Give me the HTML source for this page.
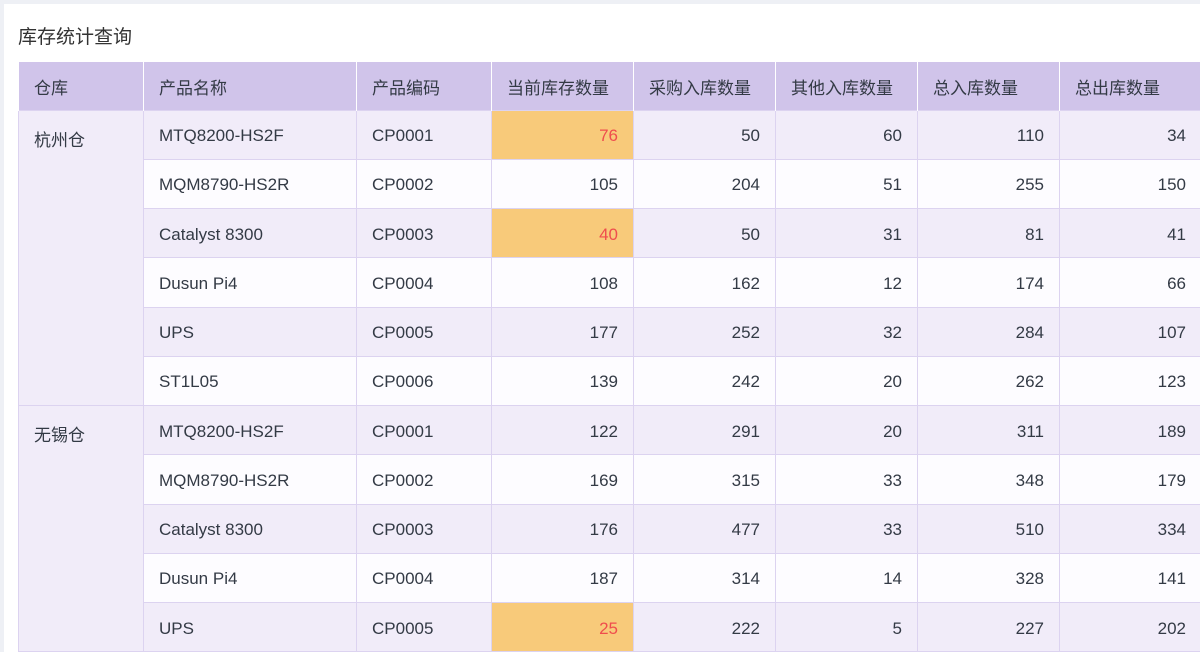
<!DOCTYPE html>
<html><head><meta charset="utf-8"><style>
*{margin:0;padding:0;box-sizing:border-box}
html,body{width:1200px;height:652px;overflow:hidden}
body{background:#eef0f5;font-family:"Liberation Sans","Noto Sans CJK SC",sans-serif;color:#333a45;position:relative}
.card{position:absolute;left:4px;top:4px;width:1196px;height:648px;background:#fff}
h1{position:absolute;left:18px;top:22px;font-size:19px;font-weight:normal;color:#333}
.wrap{position:absolute;left:0;top:0;width:1200px;height:652px;overflow:hidden}
table{position:absolute;left:18px;top:62px;width:1183px;border-collapse:collapse;table-layout:fixed;font-size:17px}
th{background:#d0c4ea;font-weight:normal;text-align:left;padding-left:15px;padding-top:2px;height:48px;border-left:1px solid #fff;border-right:1px solid #fff}
td{height:49.25px;border:1px solid #dcd3f0;padding:3px 15px 0}
td.n{text-align:right}
tr.o td{background:#f1ecf9}
tr.e td{background:#fdfcff}
td.w{background:#f1ecf9!important;vertical-align:top;padding-top:15px}
td.h{background:#f8ca7a!important;color:#ef4d4d}
</style></head><body>
<div class="card"></div>
<h1>库存统计查询</h1>
<div class="wrap">
<table>
<colgroup><col style="width:125px"><col style="width:213px"><col style="width:135px"><col style="width:142px"><col style="width:142px"><col style="width:142px"><col style="width:142px"><col style="width:142px"></colgroup>
<tr><th>仓库</th><th>产品名称</th><th>产品编码</th><th>当前库存数量</th><th>采购入库数量</th><th>其他入库数量</th><th>总入库数量</th><th>总出库数量</th></tr>
<tr class="o"><td class="w" rowspan="6">杭州仓</td><td>MTQ8200-HS2F</td><td>CP0001</td><td class="n h">76</td><td class="n">50</td><td class="n">60</td><td class="n">110</td><td class="n">34</td></tr>
<tr class="e"><td>MQM8790-HS2R</td><td>CP0002</td><td class="n">105</td><td class="n">204</td><td class="n">51</td><td class="n">255</td><td class="n">150</td></tr>
<tr class="o"><td>Catalyst 8300</td><td>CP0003</td><td class="n h">40</td><td class="n">50</td><td class="n">31</td><td class="n">81</td><td class="n">41</td></tr>
<tr class="e"><td>Dusun Pi4</td><td>CP0004</td><td class="n">108</td><td class="n">162</td><td class="n">12</td><td class="n">174</td><td class="n">66</td></tr>
<tr class="o"><td>UPS</td><td>CP0005</td><td class="n">177</td><td class="n">252</td><td class="n">32</td><td class="n">284</td><td class="n">107</td></tr>
<tr class="e"><td>ST1L05</td><td>CP0006</td><td class="n">139</td><td class="n">242</td><td class="n">20</td><td class="n">262</td><td class="n">123</td></tr>
<tr class="o"><td class="w" rowspan="5">无锡仓</td><td>MTQ8200-HS2F</td><td>CP0001</td><td class="n">122</td><td class="n">291</td><td class="n">20</td><td class="n">311</td><td class="n">189</td></tr>
<tr class="e"><td>MQM8790-HS2R</td><td>CP0002</td><td class="n">169</td><td class="n">315</td><td class="n">33</td><td class="n">348</td><td class="n">179</td></tr>
<tr class="o"><td>Catalyst 8300</td><td>CP0003</td><td class="n">176</td><td class="n">477</td><td class="n">33</td><td class="n">510</td><td class="n">334</td></tr>
<tr class="e"><td>Dusun Pi4</td><td>CP0004</td><td class="n">187</td><td class="n">314</td><td class="n">14</td><td class="n">328</td><td class="n">141</td></tr>
<tr class="o"><td>UPS</td><td>CP0005</td><td class="n h">25</td><td class="n">222</td><td class="n">5</td><td class="n">227</td><td class="n">202</td></tr>
</table>
</div>
</body></html>
